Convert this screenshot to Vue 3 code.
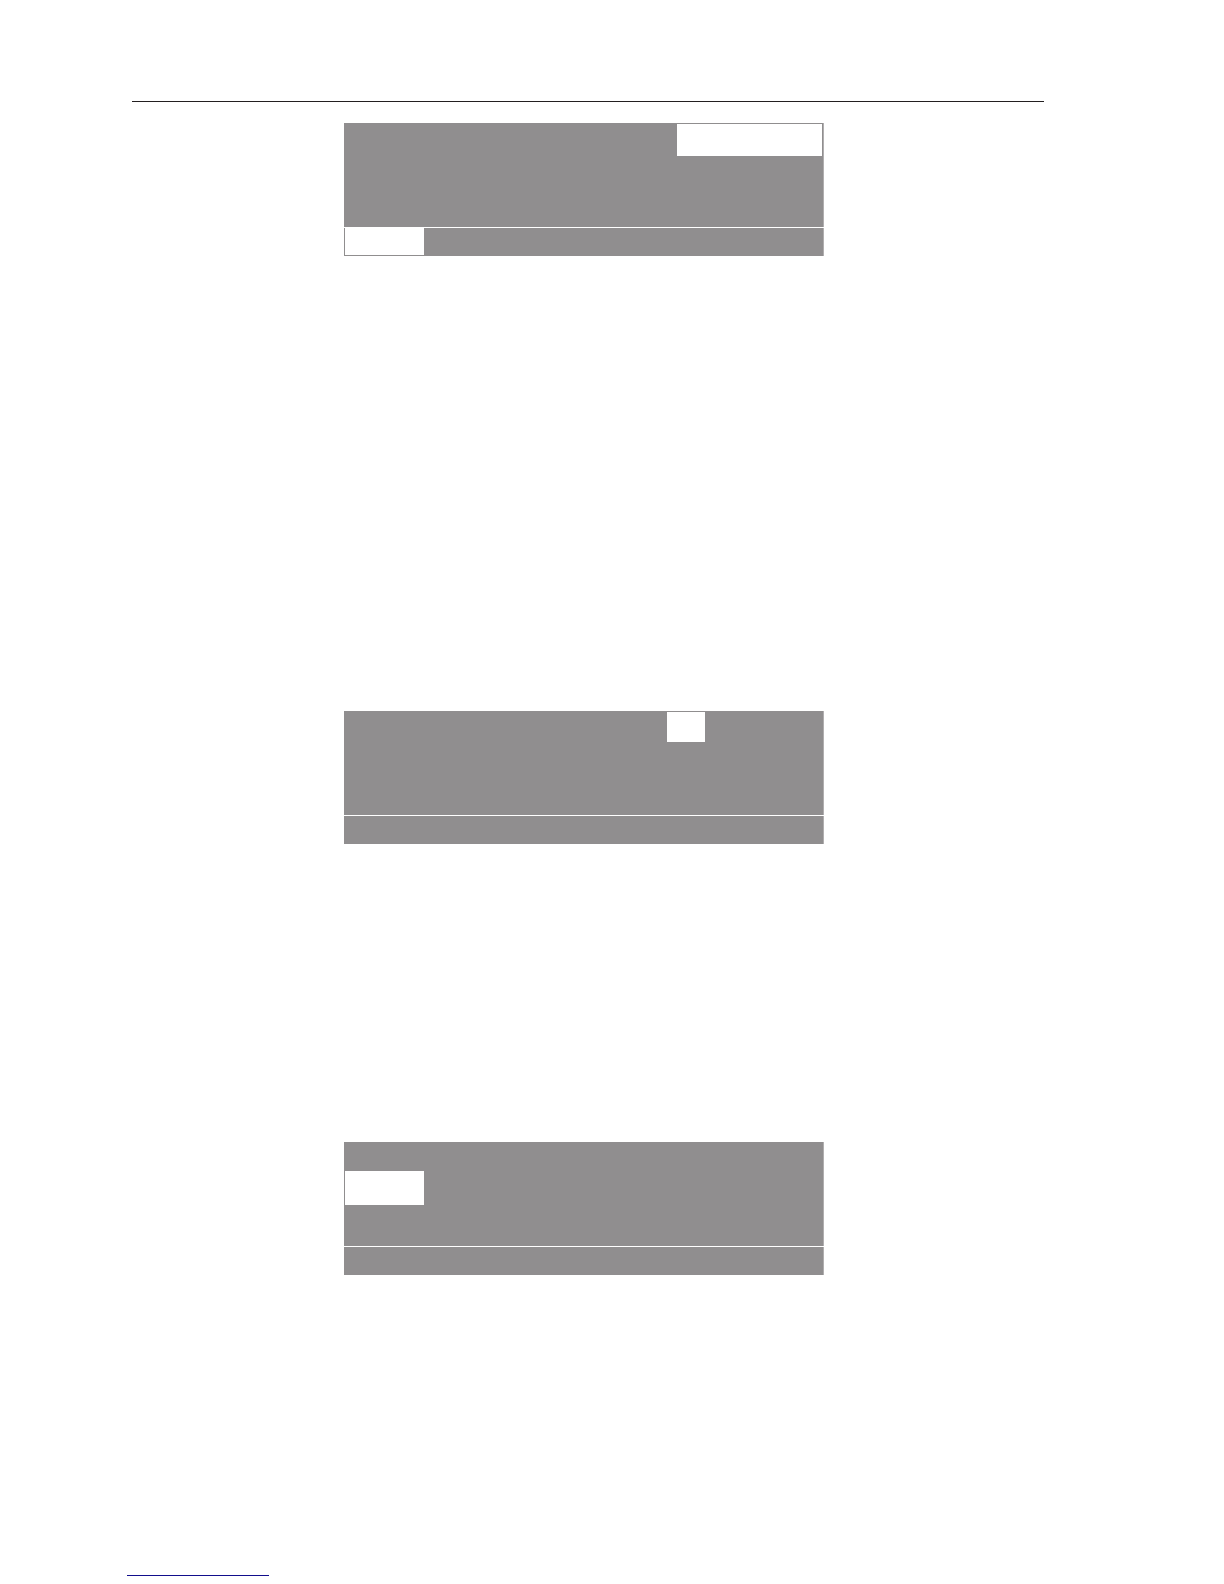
<script setup>
const panels = [
  { id: 'first', top: 'value', bottom: 'key' },
  { id: 'second', top: 'digit', bottom: '' },
  { id: 'third', top: 'row', bottom: '' },
]
</script>

<template>
  <main class="page">
    <hr class="rule" />
    <section v-for="panel in panels" :key="panel.id" class="panel" :class="panel.id">
      <div class="screen">
        <div class="field" :class="panel.top"></div>
      </div>
      <div class="keys">
        <div v-if="panel.bottom" class="field" :class="panel.bottom"></div>
      </div>
    </section>
    <hr class="footnote" />
  </main>
</template>

<style>
body {
  margin: 0;
  background: #fff;
}
</style>

<style scoped>
.page {
  box-sizing: border-box;
  display: flex;
  flex-direction: column;
  min-height: 100vh;
  padding: 101px 180px 8px 132px;
}

.rule,
.footnote {
  height: 1px;
  border: 0;
  flex: none;
}

.rule {
  width: 100%;
  margin: 0;
  background: #231f20;
}

.panel {
  box-sizing: border-box;
  display: flex;
  flex-direction: column;
  gap: 1px;
  width: 100%;
  max-width: 480px;
  align-self: center;
  margin-right: 8px;
}

.first {
  margin-top: 21px;
}

.second {
  margin-top: 455px;
}

.third {
  margin-top: 298px;
}

.screen,
.keys {
  box-sizing: border-box;
  display: flex;
  align-items: flex-start;
  padding-left: 1px;
  border-right: 1px solid #b0aeaf;
  background: #908e8f;
}

.screen {
  height: 104px;
  padding-top: 1px;
}

.keys {
  height: 28px;
}

.field {
  background: #fff;
}

.value {
  width: 145px;
  height: 32px;
  margin-right: 1px;
  margin-left: auto;
}

.digit {
  width: 38px;
  height: 30px;
  margin-right: 118px;
  margin-left: auto;
}

.row {
  width: 79px;
  height: 34px;
  margin-top: 28px;
}

.key {
  width: 79px;
  height: 27px;
}

.footnote {
  width: 142px;
  margin: 300px 0 0 -5px;
  background: #120e8c;
}
</style>
